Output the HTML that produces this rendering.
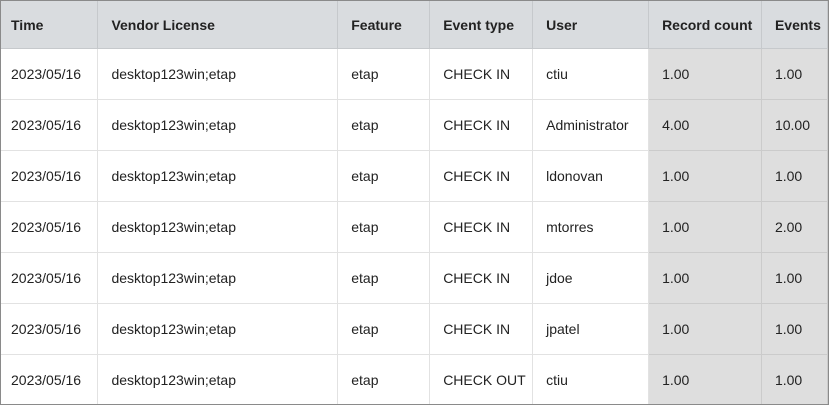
<!DOCTYPE html>
<html><head><style>
html,body{margin:0;padding:0;background:#fff;}
.wrap{width:827px;height:403px;border:1px solid #8a8a8a;overflow:hidden;position:relative;}
table{border-collapse:collapse;table-layout:fixed;font-family:"Liberation Sans",sans-serif;font-size:14px;color:#222;}
th{background:#d9dcdf;font-weight:bold;text-align:left;height:47px;padding:0 0 0 13px;border-right:1px solid #c6c9cc;border-bottom:1px solid #c6c9cc;}
td{height:50px;padding:0 0 0 13px;border-right:1px solid #e2e2e2;border-bottom:1px solid #e2e2e2;}
td.g{background:#dedede;border-color:#cbcbcb;}
th:first-child,td:first-child{padding-left:10px;}
</style></head><body><div class="wrap"><table>
<colgroup><col style="width:97px"><col style="width:240px"><col style="width:92px"><col style="width:103px"><col style="width:116px"><col style="width:113px"><col style="width:66px"></colgroup>
<tr><th>Time</th><th>Vendor License</th><th>Feature</th><th>Event type</th><th>User</th><th>Record count</th><th>Events</th></tr>
<tr><td>2023/05/16</td><td>desktop123win;etap</td><td>etap</td><td>CHECK IN</td><td>ctiu</td><td class="g">1.00</td><td class="g">1.00</td></tr>
<tr><td>2023/05/16</td><td>desktop123win;etap</td><td>etap</td><td>CHECK IN</td><td>Administrator</td><td class="g">4.00</td><td class="g">10.00</td></tr>
<tr><td>2023/05/16</td><td>desktop123win;etap</td><td>etap</td><td>CHECK IN</td><td>ldonovan</td><td class="g">1.00</td><td class="g">1.00</td></tr>
<tr><td>2023/05/16</td><td>desktop123win;etap</td><td>etap</td><td>CHECK IN</td><td>mtorres</td><td class="g">1.00</td><td class="g">2.00</td></tr>
<tr><td>2023/05/16</td><td>desktop123win;etap</td><td>etap</td><td>CHECK IN</td><td>jdoe</td><td class="g">1.00</td><td class="g">1.00</td></tr>
<tr><td>2023/05/16</td><td>desktop123win;etap</td><td>etap</td><td>CHECK IN</td><td>jpatel</td><td class="g">1.00</td><td class="g">1.00</td></tr>
<tr><td>2023/05/16</td><td>desktop123win;etap</td><td>etap</td><td>CHECK OUT</td><td>ctiu</td><td class="g">1.00</td><td class="g">1.00</td></tr>
</table></div></body></html>
